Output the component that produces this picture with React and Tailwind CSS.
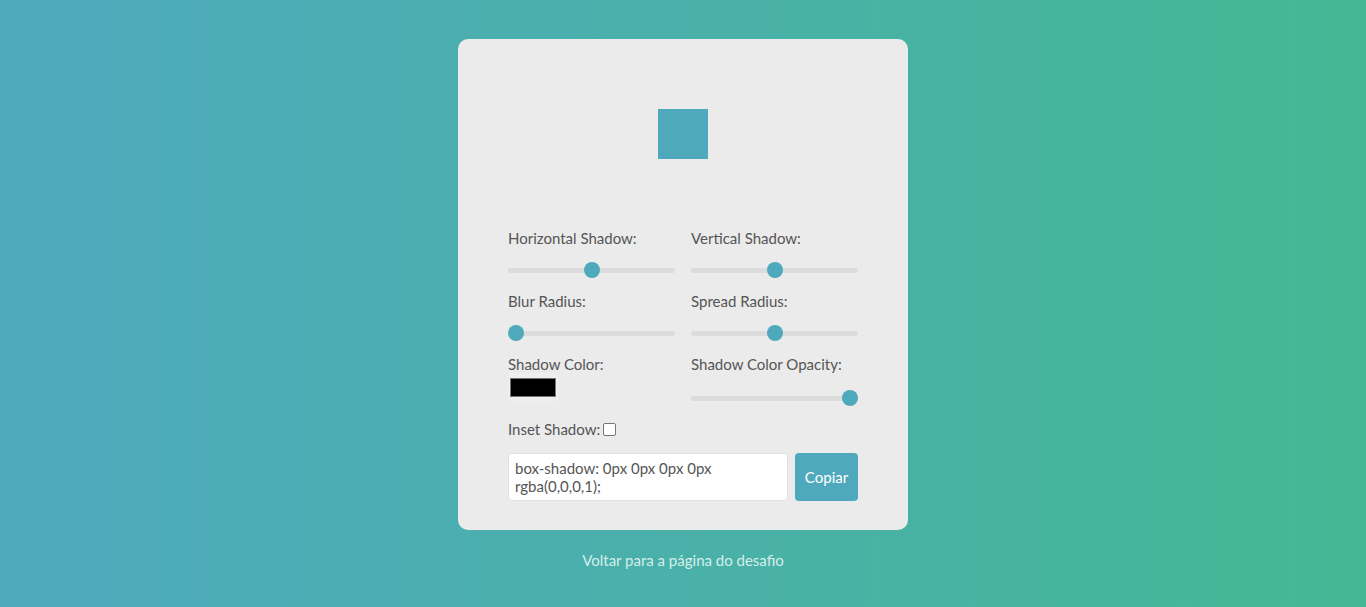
import React from "react";

function Slider({ value, className = "" }) {
  return (
    <div className={`relative h-[26px] flex items-center ${className}`}>
      <div className="h-[5px] w-full rounded-full bg-[#dcdcdc]" />
      <div
        className="absolute top-[5px] w-[16px] h-[16px] rounded-full bg-[#4fa9bc]"
        style={{ left: `calc(${value} * (100% - 16px))` }}
      />
    </div>
  );
}

export default function App() {
  return (
    <div
      className="min-h-screen w-full bg-gradient-to-r from-[#4fa9bd] to-[#45b794] flex flex-col items-center pt-[39px] text-[15px] text-[#555555]"
      style={{ fontFamily: "Lato, 'Liberation Sans', sans-serif" }}
    >
      <div className="w-[450px] rounded-[10px] bg-[#ebebeb] px-[50px] pt-[70px] pb-[29px] flex flex-col">
        <div className="self-center w-[50px] h-[50px] bg-[#4fa9bc]" />
        <div className="mt-[70px] grid grid-cols-2 gap-x-[16px] gap-y-[9px]">
          <div className="flex flex-col">
            <div className="leading-[18px] h-[18px]">Horizontal Shadow:</div>
            <Slider value={0.5} className="mt-[10px]" />
          </div>
          <div className="flex flex-col">
            <div className="leading-[18px] h-[18px]">Vertical Shadow:</div>
            <Slider value={0.5} className="mt-[10px]" />
          </div>
          <div className="flex flex-col">
            <div className="leading-[18px] h-[18px]">Blur Radius:</div>
            <Slider value={0} className="mt-[10px]" />
          </div>
          <div className="flex flex-col">
            <div className="leading-[18px] h-[18px]">Spread Radius:</div>
            <Slider value={0.5} className="mt-[10px]" />
          </div>
          <div className="flex flex-col">
            <div className="leading-[18px] h-[18px]">Shadow Color:</div>
            <div className="mt-0 w-[50px] h-[28px] bg-[#efefef] flex items-center justify-center">
              <div className="w-[46px] h-[19px] bg-black border border-[#767676]" />
            </div>
          </div>
          <div className="flex flex-col">
            <div className="leading-[18px] h-[18px]">Shadow Color Opacity:</div>
            <Slider value={1} className="mt-[12px]" />
          </div>
        </div>
        <div className="mt-[9px] flex items-center leading-[18px] h-[18px]">
          <span>Inset Shadow:</span>
          <span className="ml-[3px] inline-block w-[13px] h-[13px] rounded-[2px] border border-[#767676] bg-white" />
        </div>
        <div className="mt-[15px] flex gap-[7px]">
          <div className="w-[280px] h-[48px] rounded-[4px] bg-white border border-[#e2e2e2] px-[6px] pt-[5px] leading-[18px] text-[#555555]">
            box-shadow: 0px 0px 0px 0px
            <br />
            rgba(0,0,0,1);
          </div>
          <button className="flex-1 h-[48px] rounded-[4px] bg-[#4fa9bc] text-white text-[15px]">
            Copiar
          </button>
        </div>
      </div>
      <div className="mt-[21px] leading-[18px] text-[15px] text-[#d5eeea]">
        Voltar para a página do desafio
      </div>
    </div>
  );
}
